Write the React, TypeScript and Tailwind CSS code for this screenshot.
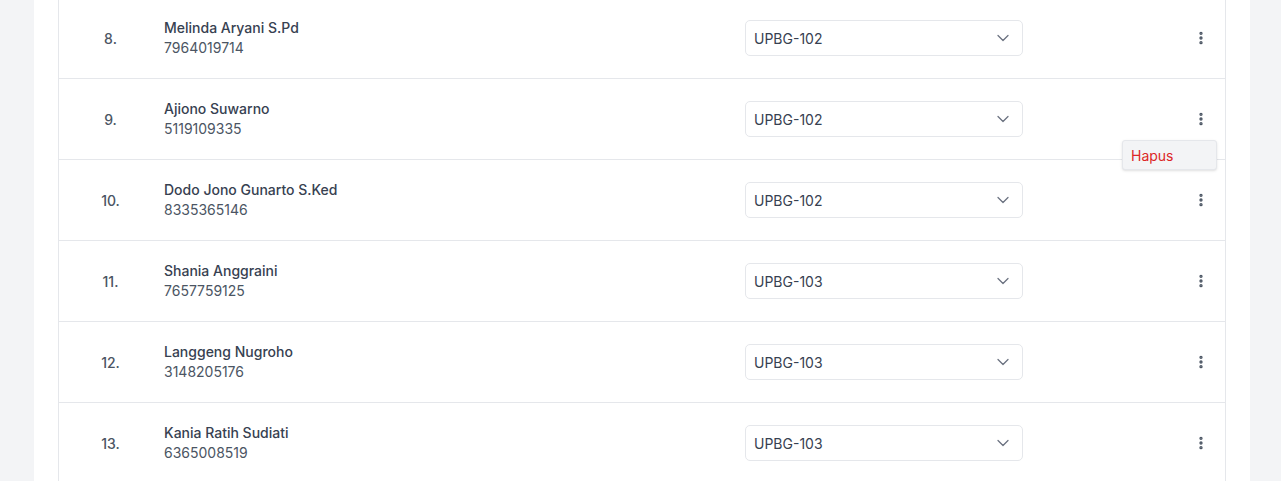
import React from 'react';
import { ChevronDown, EllipsisVertical } from 'lucide-react';

interface Member {
  no: number;
  name: string;
  nip: string;
  unit: string;
}

const members: Member[] = [
  { no: 8, name: 'Melinda Aryani S.Pd', nip: '7964019714', unit: 'UPBG-102' },
  { no: 9, name: 'Ajiono Suwarno', nip: '5119109335', unit: 'UPBG-102' },
  { no: 10, name: 'Dodo Jono Gunarto S.Ked', nip: '8335365146', unit: 'UPBG-102' },
  { no: 11, name: 'Shania Anggraini', nip: '7657759125', unit: 'UPBG-103' },
  { no: 12, name: 'Langgeng Nugroho', nip: '3148205176', unit: 'UPBG-103' },
  { no: 13, name: 'Kania Ratih Sudiati', nip: '6365008519', unit: 'UPBG-103' },
];

function MemberRow({ member, menuOpen }: { member: Member; menuOpen: boolean }) {
  return (
    <div className="flex h-[81px] shrink-0 items-center border-b border-[#e5e7eb]">
      <div className="w-[103px] text-center text-[14px] font-medium text-[#4b5563]">{member.no}.</div>
      <div className="ml-[2px] flex w-[581px] flex-col">
        <span className="text-[14px] leading-5 font-medium text-[#374151]">{member.name}</span>
        <span className="text-[14px] leading-5 text-[#4b5563]">{member.nip}</span>
      </div>
      <div className="flex h-[36px] w-[278px] items-center justify-between rounded-[5px] border border-[#e5e7eb] bg-white pr-[9px] pl-[8px]">
        <span className="text-[14px] text-[#374151]">{member.unit}</span>
        <ChevronDown size={20} strokeWidth={1.5} className="text-[#6b7280]" />
      </div>
      <div className="relative flex flex-1 justify-end pr-[16px]">
        <button className="flex h-[16px] w-[16px] items-center justify-center">
          <EllipsisVertical size={16} strokeWidth={3} className="text-[#4b5563]" />
        </button>
        {menuOpen && (
          <div className="absolute top-[29px] right-[8px] flex h-[30px] w-[95px] items-center rounded-[3px] border border-[#e5e7eb] bg-[#f3f4f6] pl-[8px] shadow-sm">
            <span className="text-[14px] text-[#dc2626]">Hapus</span>
          </div>
        )}
      </div>
    </div>
  );
}

export default function App() {
  return (
    <div
      className="h-[481px] overflow-hidden bg-[#f3f4f6] pr-[31px] pl-[34px]"
      style={{ fontFamily: 'Inter, "Noto Sans", sans-serif' }}
    >
      <div className="flex h-full flex-col bg-white px-6">
        <div className="-mt-[2px] flex flex-col border-x border-[#e5e7eb]">
          {members.map((m) => (
            <MemberRow key={m.no} member={m} menuOpen={m.no === 9} />
          ))}
        </div>
      </div>
    </div>
  );
}
